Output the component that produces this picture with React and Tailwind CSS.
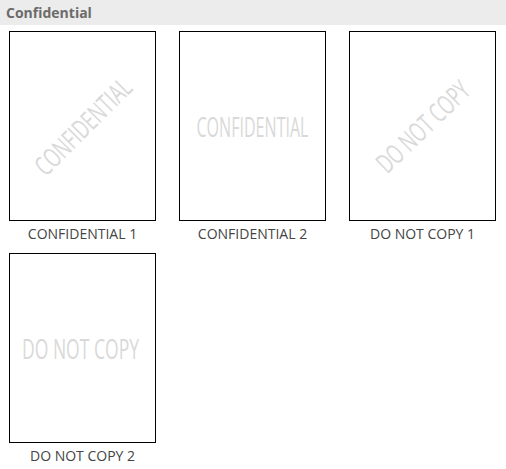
import React from 'react'

const ITEMS = [
  { label: 'CONFIDENTIAL 1', text: 'CONFIDENTIAL', angle: -45, length: 124, dx: 0 },
  { label: 'CONFIDENTIAL 2', text: 'CONFIDENTIAL', angle: 0, length: 112, dx: 0 },
  { label: 'DO NOT COPY 1', text: 'DO NOT COPY', angle: -44, length: 118, dx: 0 },
  { label: 'DO NOT COPY 2', text: 'DO NOT COPY', angle: 0, length: 117, dx: -2 },
]

function Watermark({ text, angle, length, dx }) {
  const cx = 72.5 + dx
  return (
    <svg width="145" height="188" viewBox="0 0 145 188" className="block">
      <text
        x={cx}
        y="94"
        textAnchor="middle"
        dominantBaseline="central"
        textLength={length}
        lengthAdjust="spacingAndGlyphs"
        transform={`rotate(${angle} ${cx} 94)`}
        fill="#d9d9d9"
        fontSize="27"
        fontFamily="'Open Sans', sans-serif"
      >
        {text}
      </text>
    </svg>
  )
}

export default function App() {
  return (
    <div className="w-[506px] h-[469px] bg-white font-['Open_Sans',sans-serif]">
      <div className="h-[25px] bg-[#ececec] pl-[6px] flex items-center">
        <span className="text-[14px] font-bold text-[#6b6b6b]">Confidential</span>
      </div>

      <div className="grid grid-cols-[147px_147px_147px] gap-x-[23px] pl-[9px] pt-[6px]">
        {ITEMS.map((item) => (
          <div key={item.label} className="flex flex-col">
            <div className="h-[190px] border border-black bg-white">
              <Watermark text={item.text} angle={item.angle} length={item.length} dx={item.dx} />
            </div>
            <div className="h-[32px] pt-[3px] text-center text-[14px] leading-[19px] text-[#444] whitespace-nowrap">
              {item.label}
            </div>
          </div>
        ))}
      </div>
    </div>
  )
}
